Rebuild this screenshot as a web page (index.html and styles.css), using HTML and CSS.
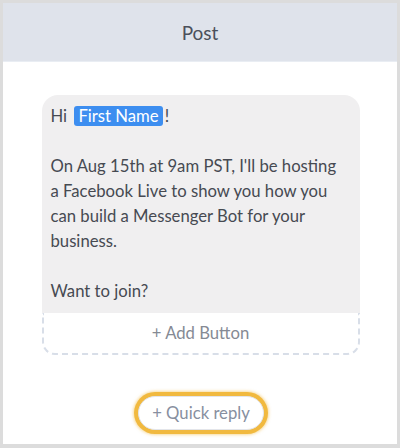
FILE: index.html
```html
<!DOCTYPE html>
<html lang="en">
<head>
    <meta charset="UTF-8">
    <meta name="viewport" content="width=device-width, initial-scale=1.0">
    <title>Post</title>
    <link rel="stylesheet" href="styles.css">
</head>
<body>
    <main class="frame">
        <header class="post-header">Post</header>
        <section class="post-body">
            <div class="message">
                <div class="message-text">
                    <p>Hi <span class="tag">First Name</span>!</p>
                    <p>On Aug 15th at 9am PST, I'll be hosting a Facebook Live to show you how you can build a Messenger Bot for your business.</p>
                    <p>Want to join?</p>
                </div>
                <button type="button" class="add-button">+ Add Button</button>
            </div>
            <button type="button" class="quick-reply">+ Quick reply</button>
        </section>
    </main>
</body>
</html>
```

FILE: styles.css
```css
html, body {
    margin: 0;
    padding: 0;
}
body {
    font-family: Lato, "Open Sans", sans-serif;
    background: #fff;
}
.frame {
    box-sizing: border-box;
    width: 400px;
    height: 448px;
    border: 3px solid #dcdcdc;
    border-bottom-width: 4px;
    display: flex;
    flex-direction: column;
}
.post-header {
    height: 58px;
    background: #dfe3eb;
    border-bottom: 1px solid #e9edf3;
    display: flex;
    align-items: center;
    justify-content: center;
    font-size: 19px;
    color: #4b505b;
}
.post-body {
    display: flex;
    flex-direction: column;
    align-items: center;
    padding-top: 33px;
}
.message {
    width: 318px;
    margin-left: 1px;
}
.message-text {
    background: #f0eff0;
    border-radius: 16px 16px 0 0;
    padding: 9px 17px 9px 9px;
    font-size: 16.7px;
    line-height: 25px;
    color: #464a52;
}
.message-text p {
    margin: 0 0 25px;
}
.message-text p:last-child {
    margin-bottom: 0;
}
.tag {
    display: inline-block;
    background: #3d8ef0;
    color: #fff;
    border-radius: 3px;
    padding: 0 4px;
    line-height: 20px;
    margin: 0 2px 0 3px;
}
.add-button {
    display: block;
    box-sizing: border-box;
    width: 100%;
    height: 42px;
    background: #fff;
    border: 2px dashed #d8dee8;
    border-top: none;
    border-radius: 0 0 13px 13px;
    font-family: inherit;
    font-size: 16.7px;
    color: #858a94;
}
.quick-reply {
    margin-top: 41px;
    height: 34px;
    padding: 0 13px;
    margin-left: 2px;
    background: #fff;
    border: 1px solid #e3e5ea;
    border-radius: 17px;
    font-family: inherit;
    font-size: 16.7px;
    color: #878fa0;
    box-shadow: 0 0 0 4px #f1b93f, 0 0 3px 5px rgba(241, 185, 63, 0.5);
}
```
